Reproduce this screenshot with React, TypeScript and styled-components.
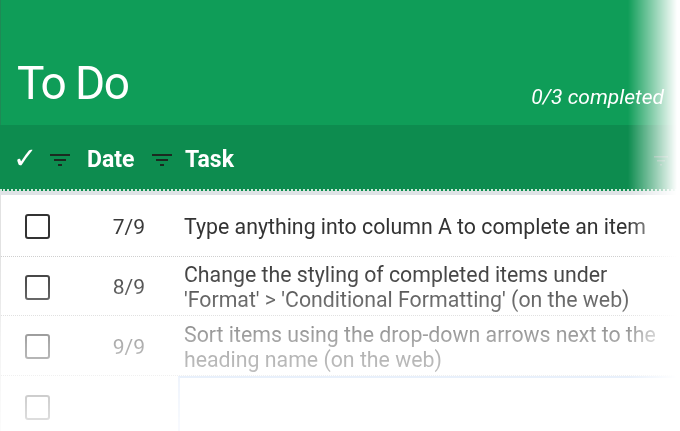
import React from "react";
import styled, { createGlobalStyle } from "styled-components";

const Global = createGlobalStyle`
  html, body { margin: 0; padding: 0; background: #ffffff; }
  body { font-family: Roboto, "Noto Sans", sans-serif; overflow: hidden; }
`;

const Page = styled.div`
  width: 680px;
  height: 431px;
  overflow: hidden;
  background: #fff;
  -webkit-mask-image: linear-gradient(to right, #000 628px, rgba(0,0,0,0) 677px);
  mask-image: linear-gradient(to right, #000 628px, rgba(0,0,0,0) 677px);
  display: flex;
  flex-direction: column;
`;

const TitleBar = styled.div`
  flex-shrink: 0;
  height: 125px;
  background: #0f9d58;
  display: flex;
  align-items: flex-end;
  justify-content: space-between;
  padding: 0 16px 17px 16px;
  box-sizing: border-box;
  color: #fff;
  border-left: 1px solid #1e8a55;
`;

const Title = styled.h1`
  margin: 0 0 2px 0;
  font-family: Roboto, sans-serif;
  font-weight: 400;
  font-size: 46px;
  line-height: 46px;
  letter-spacing: -1.6px;
`;

const Completed = styled.span`
  font-family: Roboto, sans-serif;
  font-style: italic;
  font-size: 21px;
  line-height: 21px;
`;

const HeaderRow = styled.div`
  flex-shrink: 0;
  height: 66px;
  background: #0d8c4f;
  display: flex;
  align-items: center;
  padding: 5px 0 0 13px;
  box-sizing: border-box;
  color: #fff;
  font-family: Roboto, sans-serif;
  font-weight: 700;
  font-size: 23px;
  border-bottom: 2px dotted #cfe8da;
  position: relative;
`;

const Check = styled.span`
  font-family: "DejaVu Sans", sans-serif;
  font-size: 29px;
  line-height: 29px;
  font-weight: 400;
  width: 37px;
  margin-top: -2px;
`;

const FilterIcon = styled.svg<{ $gap: number }>`
  width: 20px;
  height: 14px;
  margin-right: ${(p) => p.$gap}px;
`;

const HeadLabel = styled.span<{ $w?: number }>`
  width: ${(p) => (p.$w ? `${p.$w}px` : "auto")};
`;

const GhostFilter = styled.svg`
  position: absolute;
  right: 12px;
  top: 30px;
  width: 14px;
  height: 12px;
  opacity: 0.5;
`;

const Shadow = styled.div`
  flex-shrink: 0;
  height: 4px;
  background: #dfe3e6;
`;

const Body = styled.div`
  flex: 1 0 auto;
  display: flex;
  flex-direction: column;
  border-left: 1px solid #e2e2e2;
  -webkit-mask-image: linear-gradient(to bottom, #000 60px, rgba(0,0,0,0.85) 90px, rgba(0,0,0,0.4) 150px, rgba(0,0,0,0.15) 230px);
  mask-image: linear-gradient(to bottom, #000 60px, rgba(0,0,0,0.85) 90px, rgba(0,0,0,0.4) 150px, rgba(0,0,0,0.15) 230px);
`;

const Row = styled.div<{ $h: number; $last?: boolean }>`
  flex-shrink: 0;
  height: ${(p) => p.$h}px;
  display: grid;
  grid-template-columns: 24px 96px 1fr;
  align-items: center;
  padding: 2px 0 0 24px;
  border-bottom: ${(p) => (p.$last ? "none" : "1px dotted #cfcfcf")};
  box-sizing: border-box;
  position: relative;
`;

const Box = styled.span`
  width: 21px;
  height: 21px;
  border: 2.5px solid #333;
  border-radius: 3px;
  display: block;
`;

const DateCell = styled.span`
  text-align: right;
  font-size: 21px;
  color: #3a3a3a;
`;

const TaskCell = styled.span`
  padding-left: 39px;
  font-size: 21.3px;
  line-height: 25px;
  color: #333;
  white-space: pre-line;
`;

const Selection = styled.div`
  position: absolute;
  left: 177px;
  top: 0;
  right: 0;
  height: 60px;
  border-top: 2px solid #b3cdf3;
  border-left: 2px solid #c9daf6;
`;

const rows = [
  { date: "7/9", task: "Type anything into column A to complete an item", h: 62 },
  { date: "8/9", task: "Change the styling of completed items under\n'Format' > 'Conditional Formatting' (on the web)", h: 59 },
  { date: "9/9", task: "Sort items using the drop-down arrows next to the\nheading name (on the web)", h: 60 },
];

function Filter({ gap }: { gap: number }) {
  return (
    <FilterIcon $gap={gap} viewBox="0 0 20 14">
      <rect x="0" y="1" width="20" height="2" fill="#1b2a20" />
      <rect x="4" y="6" width="12" height="2" fill="#1b2a20" />
      <rect x="8" y="11" width="4" height="2" fill="#1b2a20" />
    </FilterIcon>
  );
}

export default function App() {
  return (
    <>
      <Global />
      <Page>
        <TitleBar>
          <Title>To Do</Title>
          <Completed>0/3 completed</Completed>
        </TitleBar>
        <HeaderRow>
          <Check>✓</Check>
          <Filter gap={17} />
          <HeadLabel $w={65}>Date</HeadLabel>
          <Filter gap={13} />
          <HeadLabel>Task</HeadLabel>
          <GhostFilter viewBox="0 0 14 12">
            <rect x="0" y="1" width="14" height="1.5" fill="#999" />
            <rect x="3" y="5" width="8" height="1.5" fill="#999" />
            <rect x="6" y="9" width="2" height="1.5" fill="#999" />
          </GhostFilter>
        </HeaderRow>
        <Shadow />
        <Body>
          {rows.map((r, i) => (
            <Row key={i} $h={r.h}>
              <Box />
              <DateCell>{r.date}</DateCell>
              <TaskCell>{r.task}</TaskCell>
            </Row>
          ))}
          <Row $h={60} $last>
            <Box />
            <Selection />
          </Row>
        </Body>
      </Page>
    </>
  );
}
